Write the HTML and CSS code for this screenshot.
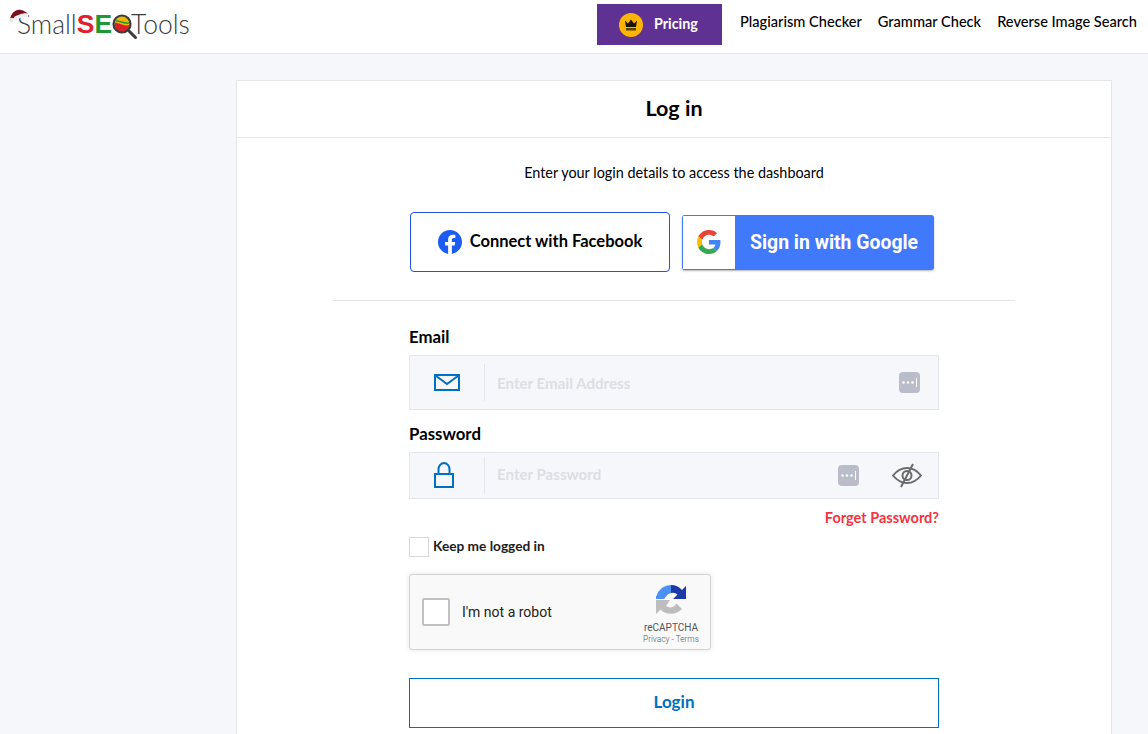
FILE: index.html
```html
<!DOCTYPE html>
<html>
<head>
  <title>Log in</title>
  <link rel="stylesheet" href="styles.css">
</head>
<body>
  <div class="topbar">
    <a class="logo">
      <svg class="logo-hat" width="20" height="14" viewBox="0 0 20 14">
        <path d="M1 10C2 5 6 0 12 1C15 1.500 17 3 19 5C16 4 14 5 11 6L5 9Z" fill="#7d0f1c"/>
        <path d="M5 8C9 6 13 3.500 19 5C20 7 19 8 16 8C12 8 9 10 7 12C5 11 5 9 5 8Z" fill="#eeeeee"/>
        <circle cx="2.500" cy="11" r="2.200" fill="#e4e4e4"/>
      </svg>
      <span>Small</span><span class="logo-s">S</span><span class="logo-e">E</span>
      <svg class="logo-q" width="26" height="26" viewBox="0 0 26 26">
        <circle cx="10" cy="10" r="8" fill="#f4b400"/>
        <path d="M2.500 9C7 8 11 13 17.500 11C17 15 14 18 10 18C6 18 2.500 14 2.500 9Z" fill="#d8202c"/>
        <path d="M4 7C8 6.500 12 10 17 9" fill="none" stroke="#1d9a35" stroke-width="1.500"/>
        <circle cx="10" cy="10" r="8.500" fill="none" stroke="#3c3c3c" stroke-width="2.200"/>
        <line x1="16.500" y1="16.500" x2="23.500" y2="23.500" stroke="#3c3c3c" stroke-width="3" stroke-linecap="round"/>
      </svg>
      <span>Tools</span>
    </a>
    <div class="nav">
      <a class="pricing">
        <span class="crown">
          <svg width="14" height="12" viewBox="0 0 14 12">
            <path d="M1 1.500L4 4.500L7 0.500L10 4.500L13 1.500L12 8H2Z" fill="#1d1400"/>
            <rect x="2" y="9" width="10" height="2.500" fill="#5c4300"/>
          </svg>
        </span>
        <span class="pricing-text">Pricing</span>
      </a>
      <a class="nav-link">Plagiarism Checker</a>
      <a class="nav-link">Grammar Check</a>
      <a class="nav-link">Reverse Image Search</a>
    </div>
  </div>

  <div class="page">
    <div class="card">
      <div class="card-title">Log in</div>
      <div class="card-body">
        <p class="intro">Enter your login details to access the dashboard</p>

        <div class="social">
          <a class="btn-facebook">
            <svg width="24" height="24" viewBox="0 0 24 24">
              <path fill="#1c5cf5" d="M24 12.073c0-6.627-5.373-12-12-12s-12 5.373-12 12c0 5.990 4.388 10.954 10.125 11.854v-8.385H7.078v-3.470h3.047V9.430c0-3.007 1.792-4.669 4.533-4.669 1.312 0 2.686.235 2.686.235v2.953H15.830c-1.491 0-1.956.925-1.956 1.874v2.250h3.328l-.532 3.470h-2.796v8.385C19.612 23.027 24 18.062 24 12.073z"/>
            </svg>
            <span class="facebook-text">Connect with Facebook</span>
          </a>
          <a class="btn-google">
            <span class="google-icon">
              <svg width="24" height="24" viewBox="0 0 48 48">
                <path fill="#EA4335" d="M24 9.500c3.540 0 6.710 1.220 9.210 3.600l6.850-6.850C35.900 2.380 30.470 0 24 0 14.620 0 6.510 5.380 2.560 13.220l7.980 6.190C12.430 13.720 17.740 9.500 24 9.500z"/>
                <path fill="#4285F4" d="M46.980 24.550c0-1.570-.15-3.090-.38-4.550H24v9.020h12.940c-.58 2.960-2.260 5.480-4.780 7.180l7.730 6c4.510-4.180 7.090-10.360 7.090-17.650z"/>
                <path fill="#FBBC05" d="M10.530 28.590c-.48-1.450-.76-2.990-.76-4.590s.27-3.140.76-4.590l-7.980-6.190C.92 16.460 0 20.120 0 24c0 3.880.92 7.540 2.560 10.780l7.970-6.190z"/>
                <path fill="#34A853" d="M24 48c6.480 0 11.930-2.130 15.890-5.810l-7.730-6c-2.150 1.450-4.920 2.300-8.160 2.300-6.260 0-11.570-4.220-13.470-9.910l-7.980 6.190C6.510 42.620 14.620 48 24 48z"/>
              </svg>
            </span>
            <span class="google-text">Sign in with Google</span>
          </a>
        </div>

        <hr class="divider">

        <form class="login-form">
          <label class="field-label">Email</label>
          <div class="field field-email">
            <span class="field-icon">
              <svg width="26" height="17" viewBox="0 0 26 17">
                <rect x="1" y="1" width="24" height="15" fill="none" stroke="#0070c0" stroke-width="2"/>
                <path d="M1.500 1.500L13 10L24.500 1.500" fill="none" stroke="#0070c0" stroke-width="2"/>
              </svg>
            </span>
            <input class="field-input" type="text" placeholder="Enter Email Address">
            <svg class="key-icon" width="21" height="21" viewBox="0 0 21 21">
              <rect width="21" height="21" rx="4" fill="#b8bdc9"/>
              <circle cx="4.500" cy="10.500" r="1.300" fill="#fff"/>
              <circle cx="9" cy="10.500" r="1.300" fill="#fff"/>
              <circle cx="13.500" cy="10.500" r="1.300" fill="#fff"/>
              <rect x="17" y="6" width="1" height="9" fill="#fff"/>
            </svg>
          </div>

          <label class="field-label field-label-next">Password</label>
          <div class="field field-password">
            <span class="field-icon">
              <svg class="lock-icon" width="20" height="26" viewBox="0 0 20 26">
                <rect x="1" y="12" width="18" height="13" fill="none" stroke="#0070c0" stroke-width="2"/>
                <path d="M4.500 12V7.500C4.500 4 7 1 10 1C13 1 15.500 4 15.500 7.500V12" fill="none" stroke="#0070c0" stroke-width="2"/>
              </svg>
            </span>
            <input class="field-input" type="password" placeholder="Enter Password">
            <svg class="key-icon" width="21" height="21" viewBox="0 0 21 21">
              <rect width="21" height="21" rx="4" fill="#b8bdc9"/>
              <circle cx="4.500" cy="10.500" r="1.300" fill="#fff"/>
              <circle cx="9" cy="10.500" r="1.300" fill="#fff"/>
              <circle cx="13.500" cy="10.500" r="1.300" fill="#fff"/>
              <rect x="17" y="6" width="1" height="9" fill="#fff"/>
            </svg>
            <svg class="eye-icon" width="30" height="25" viewBox="0 0 30 25">
              <path d="M1 12.500C5 7.500 10 5 15 5C20 5 25 7.500 29 12.500C25 17.500 20 20 15 20C10 20 5 17.500 1 12.500Z" fill="none" stroke="#6b6b6b" stroke-width="2"/>
              <circle cx="15" cy="12.500" r="4.500" fill="none" stroke="#6b6b6b" stroke-width="2"/>
              <line x1="21" y1="1" x2="9" y2="24" stroke="#6b6b6b" stroke-width="2"/>
            </svg>
          </div>

          <div class="forget"><a>Forget Password?</a></div>

          <label class="keep">
            <span class="keep-box"></span>
            <span class="keep-text">Keep me logged in</span>
          </label>

          <div class="recaptcha">
            <span class="recaptcha-box"></span>
            <span class="recaptcha-label">I'm not a robot</span>
            <div class="recaptcha-brand">
              <svg width="32" height="32" viewBox="0 0 32 32">
                <path d="M16 1A15 15 0 0 0 1.500 12H1V15H9L11 12.500A7 7 0 0 1 16 9Z" fill="#4a90f5"/>
                <path d="M16 1A15 15 0 0 1 27 6L31 2V15H18L22.500 10.500A7 7 0 0 0 16 9Z" fill="#1c3aa9"/>
                <path d="M1 16V30L5.500 25.500A15 15 0 0 0 27 25L21.500 19.500A7 7 0 0 1 11 22L15 16Z" fill="#bdbdbd"/>
              </svg>
              <div class="recaptcha-name">reCAPTCHA</div>
              <div class="recaptcha-links">Privacy - Terms</div>
            </div>
          </div>

          <button class="btn-login" type="button">Login</button>
        </form>
      </div>
    </div>
  </div>
</body>
</html>
```

FILE: styles.css
```css
* {
  box-sizing: border-box;
  font-family: 'Lato', 'Noto Sans', sans-serif;
}

html, body {
  height: 734px;
  overflow: hidden;
}

body {
  margin: 0;
  background-color: #f6f7fb;
  color: #000;
}

.topbar {
  display: flex;
  justify-content: space-between;
  height: 54px;
  background-color: #fff;
  border-bottom: 1px solid #e4e6ee;
  padding: 4px 11px 0 17px;
}

.logo {
  position: relative;
  display: flex;
  align-items: center;
  height: 40px;
  font-size: 26.5px;
  font-weight: 300;
  color: #3c3c3c;
}

.logo-hat {
  position: absolute;
  left: -8px;
  top: 5px;
}

.logo-s, .logo-e {
  font-family: 'Liberation Sans', sans-serif;
  font-weight: 700;
}

.logo-s {
  color: #e2202c;
}

.logo-e {
  color: #1d9a35;
}

.logo-q {
  margin: 6px -7px 0 0;
}

.nav {
  display: flex;
  align-items: flex-start;
}

.pricing {
  display: flex;
  align-items: center;
  gap: 11px;
  width: 125px;
  height: 41px;
  padding-left: 22px;
  margin-right: 18px;
  background-color: #5e3193;
  color: #fff;
  font-size: 14px;
  font-weight: 700;
}

.pricing-text {
  margin-bottom: 3px;
  font-size: 14.3px;
}

.crown {
  display: flex;
  align-items: center;
  justify-content: center;
  width: 24px;
  height: 24px;
  border-radius: 50%;
  background-color: #ffb400;
}

.nav-link {
  margin-left: 16px;
  font-size: 14.6px;
  font-weight: 500;
  line-height: 35px;
}

.pricing + .nav-link {
  margin-left: 0;
}

.page {
  padding: 26px 36px 0 236px;
}

.card {
  background-color: #fff;
  border: 1px solid #e4e6ee;
  padding-bottom: 40px;
}

.card-title {
  height: 57px;
  border-bottom: 1px solid #e4e6ee;
  text-align: center;
  font-size: 21.5px;
  font-weight: 700;
  line-height: 54px;
}

.intro {
  margin: 0;
  padding-top: 25px;
  text-align: center;
  font-size: 14.4px;
  line-height: 20px;
}

.social {
  display: flex;
  align-items: center;
  gap: 12px;
  width: 530px;
  margin: 29px auto 0;
  padding-left: 1px;
}

.btn-facebook {
  display: flex;
  align-items: center;
  justify-content: center;
  gap: 8px;
  width: 260px;
  height: 60px;
  border: 1px solid #1f4ff5;
  border-radius: 4px;
}

.facebook-text {
  margin-bottom: 3px;
  font-size: 16.5px;
  font-weight: 700;
}

.btn-google {
  display: flex;
  align-items: center;
  width: 252px;
  height: 55px;
  padding: 1px;
  border-radius: 3px;
  background-color: #4079fb;
  box-shadow: 0 1px 2px rgba(0, 0, 0, 0.3);
}

.google-icon {
  display: flex;
  align-items: center;
  justify-content: center;
  width: 52px;
  height: 53px;
  background-color: #fff;
}

.google-text {
  margin: 1px 0 0 15px;
  font-family: 'Roboto', sans-serif;
  font-size: 19.4px;
  font-weight: 700;
  color: #fff;
}

.divider {
  width: 682px;
  height: 1px;
  margin: 28px auto 0;
  border: 0;
  background-color: #e4e6ee;
}

.login-form {
  width: 530px;
  margin: 26px auto 0;
}

.field-label {
  display: block;
  font-size: 16.8px;
  font-weight: 700;
  line-height: 20px;
}

.field-label-next {
  margin-top: 14px;
}

.field {
  display: flex;
  align-items: center;
  margin-top: 8px;
  background-color: #f6f7fb;
  border: 1px solid #e4e6ee;
}

.field-email {
  height: 55px;
}

.field-password {
  height: 47px;
}

.field-icon {
  display: flex;
  align-items: center;
  justify-content: center;
  width: 75px;
  height: 37px;
  border-right: 1px solid #e4e6ee;
}

.lock-icon {
  margin: 0 7px 2px 0;
}

.field-input {
  flex: 1;
  min-width: 0;
  height: 100%;
  padding: 0 12px;
  border: 0;
  outline: 0;
  background-color: transparent;
  font-size: 15.1px;
  font-weight: 700;
}

.field-password .field-input {
  padding-bottom: 3px;
}

.field-input::placeholder {
  color: #dcdee3;
  opacity: 1;
}

.key-icon {
  flex: none;
  margin-right: 18px;
}

.field-password .key-icon {
  margin-right: 33px;
}

.eye-icon {
  flex: none;
  margin-right: 16px;
}

.forget {
  margin-top: 9px;
  text-align: right;
  font-size: 14.5px;
  font-weight: 700;
  line-height: 20px;
  color: #f5333f;
}

.keep {
  display: flex;
  align-items: center;
  gap: 4px;
  margin-top: 9px;
  color: #1c1c1c;
}

.keep-text {
  margin-bottom: 3px;
  font-size: 13.7px;
  font-weight: 700;
}

.keep-box {
  width: 20px;
  height: 20px;
  background-color: #fff;
  border: 1px solid #d8d8d8;
}

.recaptcha {
  display: flex;
  align-items: center;
  width: 302px;
  height: 76px;
  margin-top: 17px;
  padding-left: 12px;
  background-color: #f9f9f9;
  border: 1px solid #d3d3d3;
  border-radius: 3px;
  box-shadow: 0 0 4px 1px rgba(0, 0, 0, 0.08);
}

.recaptcha-box {
  flex: none;
  width: 28px;
  height: 28px;
  background-color: #fff;
  border: 2px solid #c1c1c1;
  border-radius: 2px;
}

.recaptcha-label {
  flex: 1;
  margin-left: 12px;
  font-family: 'Roboto', sans-serif;
  font-size: 14px;
  color: #222;
}

.recaptcha-brand {
  display: flex;
  flex-direction: column;
  align-items: center;
  width: 66px;
  margin-right: 6px;
  padding-top: 4px;
  color: #555;
}

.recaptcha-name {
  margin-top: 5px;
  font-family: 'Roboto', sans-serif;
  font-size: 10px;
  line-height: 13px;
}

.recaptcha-links {
  font-family: 'Roboto', sans-serif;
  font-size: 8.3px;
  font-weight: 300;
  line-height: 10px;
}

.btn-login {
  display: block;
  width: 100%;
  height: 50px;
  margin-top: 28px;
  padding-bottom: 4px;
  background-color: #fff;
  border: 1px solid #0070c0;
  color: #0070c0;
  font-size: 17px;
  font-weight: 700;
}
```
